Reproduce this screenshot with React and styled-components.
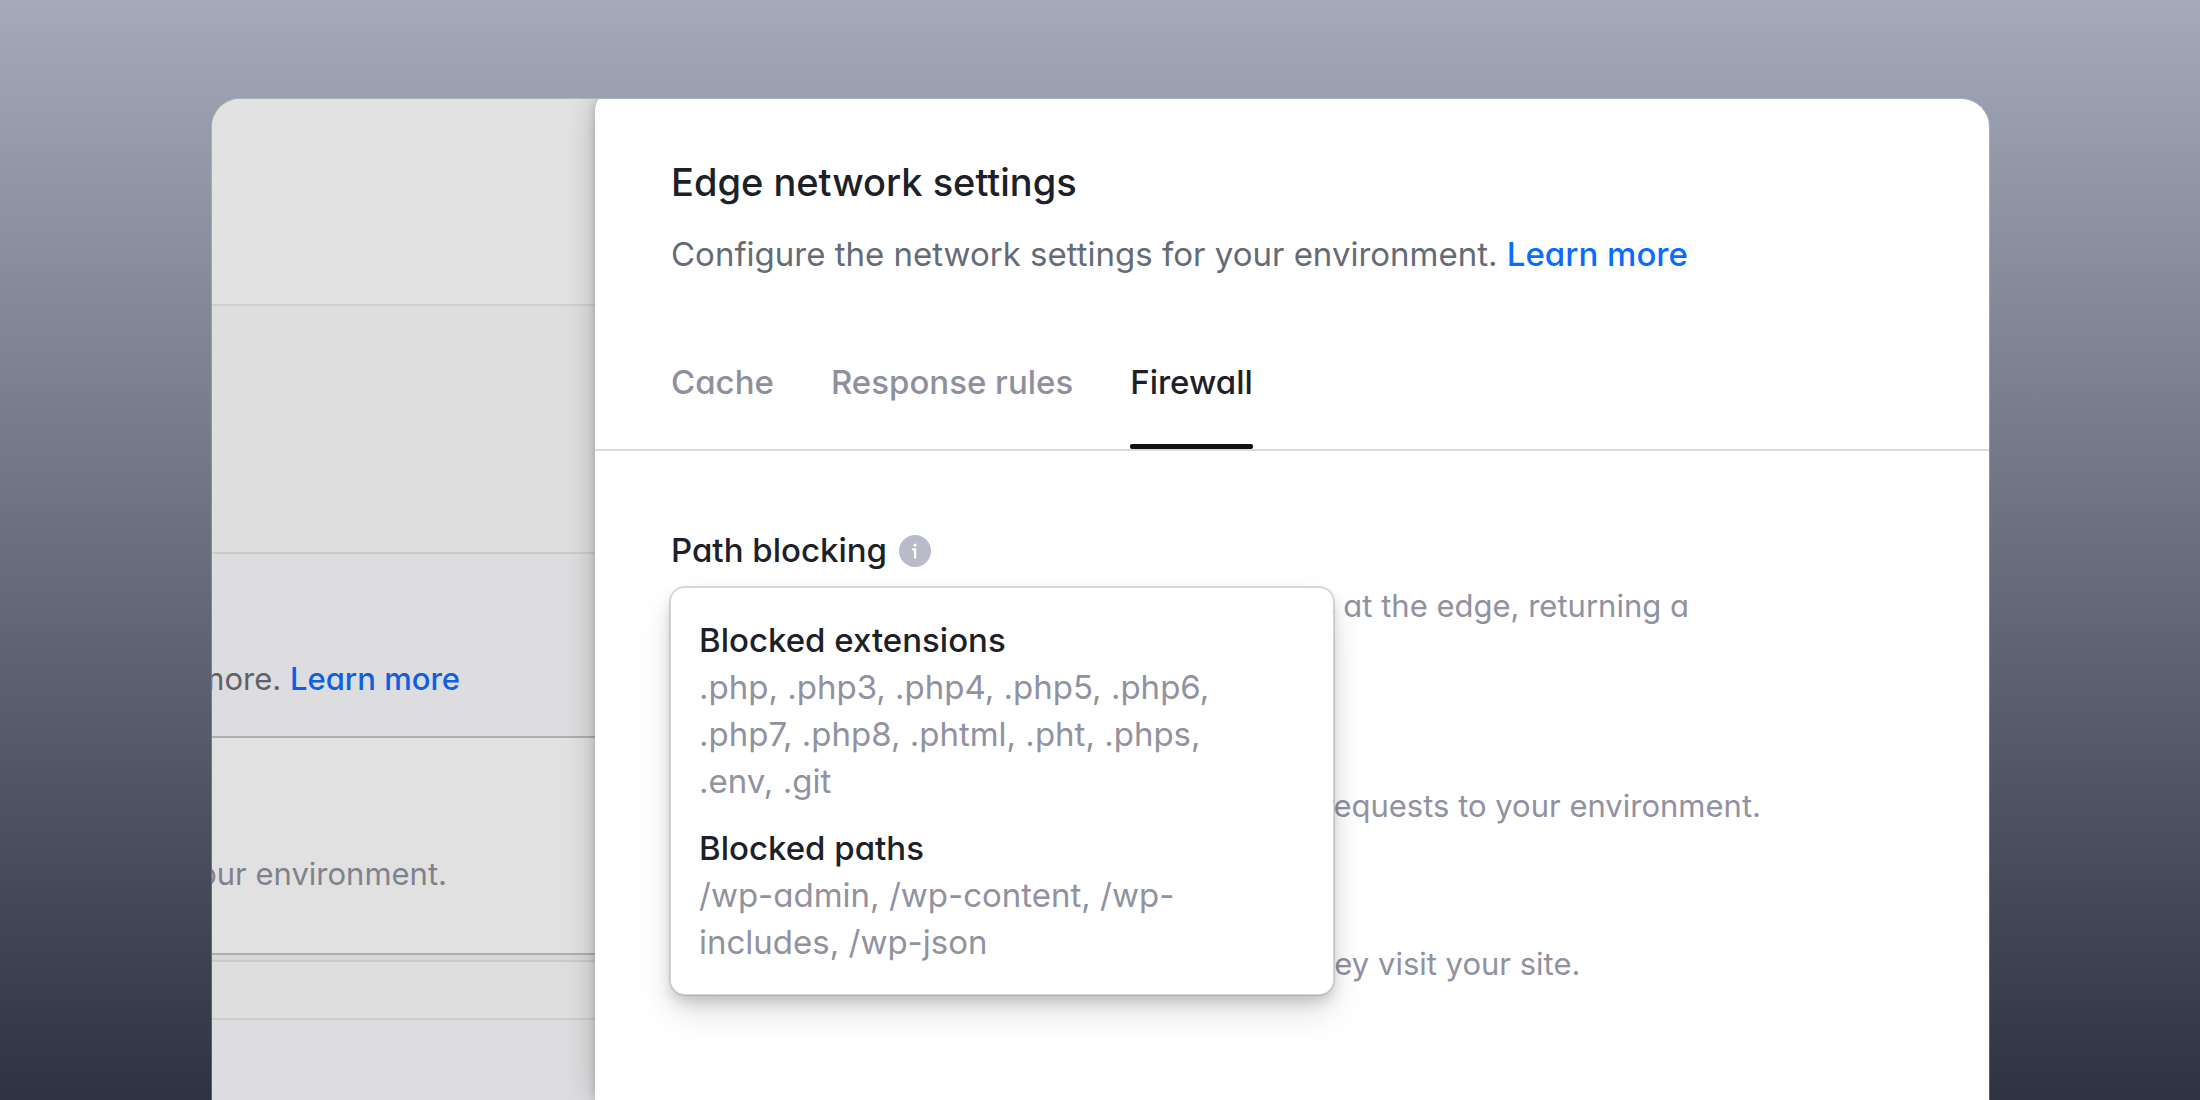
import React from "react";
import styled, { createGlobalStyle } from "styled-components";

const GlobalStyle = createGlobalStyle`
  *, *::before, *::after { box-sizing: border-box; }
  body {
    margin: 0;
    font-family: Inter, "Liberation Sans", sans-serif;
    font-feature-settings: "cv11";
    font-variant-ligatures: no-common-ligatures;
    font-optical-sizing: none;
    color: #1d2127;
  }
  h1, h2, h3, p, dl, dt, dd { margin: 0; }
`;

const Page = styled.main`
  display: flex;
  min-height: 100vh;
  padding: 99px 211px 0 212px;
  background: linear-gradient(#a4aab9, #2e3341);
`;

const Window = styled.div`
  flex: 1;
  min-width: 0;
  display: grid;
  grid-template-columns: 383px minmax(0, 1fr);
  overflow: hidden;
  background: #e2e2e2;
  border-radius: 28px 28px 0 0;
  box-shadow: 0 0 0 1px rgba(255, 255, 255, 0.2);
`;

const Backdrop = styled.div`
  display: flex;
  flex-direction: column;
  min-width: 0;
`;

const BackdropRow = styled.div`
  display: flex;
  align-items: flex-end;
  justify-content: flex-end;
  flex: ${(p) => (p.$height ? `0 0 ${p.$height}px` : "1")};
  padding: ${(p) => p.$padding || "0"};
  background: ${(p) => p.$background};
  border-bottom: ${(p) => (p.$line ? `2px solid ${p.$line}` : "0")};
`;

const BackdropText = styled.p`
  flex: none;
  white-space: nowrap;
  font-size: 31px;
  line-height: 42px;
  color: ${(p) => (p.$strong ? "#5c616a" : "#81818d")};
`;

const Link = styled.a`
  color: ${(p) => (p.$dimmed ? "#0d5fe3" : "#0b6bff")};
  font-weight: 500;
  text-decoration: none;
`;

const Panel = styled.section`
  position: relative;
  min-width: 0;
  background: #fff;
  border-top-left-radius: 5px 14px;
  box-shadow: 0 0 32px rgba(0, 0, 0, 0.2), 0 0 10px rgba(0, 0, 0, 0.18);
`;

const PanelHeader = styled.header`
  padding: 60px 76px 0;
  border-bottom: 2px solid #dcdce3;
`;

const Title = styled.h1`
  font-size: 38px;
  line-height: 47px;
  font-weight: 500;
`;

const Subtitle = styled.p`
  margin-top: 25px;
  font-size: 33px;
  line-height: 47px;
  color: #656b75;
`;

const Tabs = styled.nav`
  display: flex;
  gap: 57px;
  margin-top: 81px;
`;

const Tab = styled.button`
  display: flex;
  flex-direction: column;
  gap: 38px;
  padding: 0;
  border: 0;
  background: none;
  font: inherit;
  font-size: 33px;
  line-height: 47px;
  font-weight: 500;
  font-feature-settings: "cv11";
  color: ${(p) => (p.$active ? "#1d2127" : "#8f8f9d")};

  &::after {
    content: "";
    align-self: stretch;
    height: 5px;
    border-radius: 2px;
    background: ${(p) => (p.$active ? "#111214" : "transparent")};
  }
`;

const PanelBody = styled.div`
  padding: 76px 76px 0;
`;

const SectionHead = styled.div`
  position: relative;
  display: flex;
  align-items: center;
  gap: 12px;
`;

const SectionTitle = styled.h2`
  font-size: 33px;
  line-height: 47px;
  font-weight: 500;
`;

const InfoButton = styled.button`
  display: flex;
  padding: 0;
  border: 0;
  background: none;
`;

const Popover = styled.dl`
  position: absolute;
  z-index: 1;
  top: calc(100% + 12px);
  left: -2px;
  width: 666px;
  display: grid;
  gap: 20px;
  padding: 29px 60px 28px 28px;
  border: 2px solid rgba(90, 105, 125, 0.25);
  border-radius: 16px;
  background: #fff padding-box;
  box-shadow: 0 18px 36px -4px rgba(0, 0, 0, 0.14), 0 8px 14px -2px rgba(0, 0, 0, 0.16);
  font-size: 33px;
  line-height: 47px;
`;

const Term = styled.dt`
  font-weight: 500;
`;

const Detail = styled.dd`
  color: #9191a0;
`;

const Descriptions = styled.div`
  display: grid;
  gap: 116px;
  margin-top: 11px;
`;

const Description = styled.p`
  min-height: ${(p) => (p.$lines || 1) * 42}px;
  font-size: 31px;
  line-height: 42px;
  color: #9191a0;
`;

function InfoIcon() {
  return (
    <svg width="32" height="32" viewBox="0 0 32 32" fill="none" aria-hidden="true">
      <circle cx="16" cy="16" r="16" fill="#b9bbc8" />
      <circle cx="16" cy="10" r="1.6" fill="#fff" />
      <path d="M13.2 14.4h2.9V23.6" stroke="#fff" strokeWidth="2.2" />
    </svg>
  );
}

const TABS = ["Cache", "Response rules", "Firewall"];

export default function App() {
  return (
    <>
      <GlobalStyle />
      <Page>
        <Window>
          <Backdrop>
            <BackdropRow $height={207} $background="#e2e2e2" $line="#cfcfcf" />
            <BackdropRow $height={248} $background="#dedede" $line="#cbcbcd" />
            <BackdropRow $height={184} $background="#dddddf" $line="#adadb7" $padding="0 135px 36px 0">
              <BackdropText $strong>
                more. <Link $dimmed href="#learn-more">Learn more</Link>
              </BackdropText>
            </BackdropRow>
            <BackdropRow $height={217} $background="#e1e1e1" $line="#adadb5" $padding="0 148px 58px 0">
              <BackdropText>your environment.</BackdropText>
            </BackdropRow>
            <BackdropRow $height={7} $background="#d8d8da" $line="#cacacb" />
            <BackdropRow $height={58} $background="#dedede" $line="#cdcdce" />
            <BackdropRow $background="#dddddf" />
          </Backdrop>

          <Panel>
            <PanelHeader>
              <Title>Edge network settings</Title>
              <Subtitle>
                Configure the network settings for your environment.{" "}
                <Link href="#learn-more">Learn more</Link>
              </Subtitle>
              <Tabs>
                {TABS.map((tab) => (
                  <Tab key={tab} type="button" $active={tab === "Firewall"}>
                    {tab}
                  </Tab>
                ))}
              </Tabs>
            </PanelHeader>

            <PanelBody>
              <SectionHead>
                <SectionTitle>Path blocking</SectionTitle>
                <InfoButton type="button" aria-label="About path blocking">
                  <InfoIcon />
                </InfoButton>
                <Popover>
                  <div>
                    <Term>Blocked extensions</Term>
                    <Detail>
                      .php, .php3, .php4, .php5, .php6, .php7, .php8, .phtml, .pht, .phps, .env, .git
                    </Detail>
                  </div>
                  <div>
                    <Term>Blocked paths</Term>
                    <Detail>/wp-admin, /wp-content, /wp-includes, /wp-json</Detail>
                  </div>
                </Popover>
              </SectionHead>
              <Descriptions>
                <Description $lines={2}>
                  Block requests to unsafe file types and paths at the edge, returning a
                </Description>
                <Description>
                  Block known IP addresses from making any requests to your environment.
                </Description>
                <Description>
                  Show your visitors a security check before they visit your site.
                </Description>
              </Descriptions>
            </PanelBody>
          </Panel>
        </Window>
      </Page>
    </>
  );
}
